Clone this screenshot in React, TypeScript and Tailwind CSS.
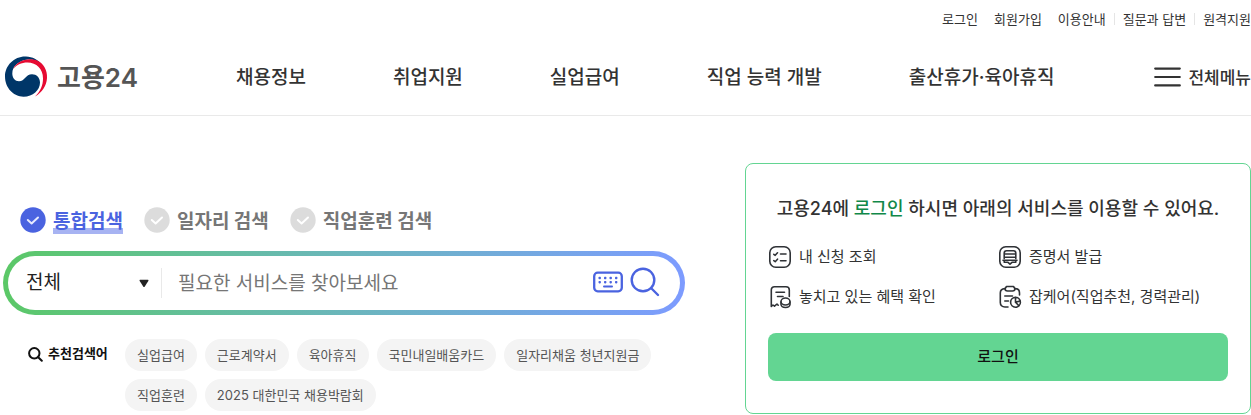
import React, { useState } from "react";

const NAV = ["채용정보", "취업지원", "실업급여", "직업 능력 개발", "출산휴가·육아휴직"];
const TABS = ["통합검색", "일자리 검색", "직업훈련 검색"];
const KEYWORDS = [
  "실업급여",
  "근로계약서",
  "육아휴직",
  "국민내일배움카드",
  "일자리채움 청년지원금",
  "직업훈련",
  "2025 대한민국 채용박람회",
];

function GovMark() {
  return (
    <svg width="44" height="44" viewBox="0 0 44 44" aria-hidden="true">
      <path
        d="M22 1.5C10.500 1 1 10.300 1 21.600C1 33 9.500 41.700 19.500 41.700C29 41.700 36 35 36 27.500C36 22.500 32.500 19.200 28 19.200C21.500 19.200 21 26.200 15 26.200C11 26.200 8.300 23 8.300 18.500C8.300 11 15 5.500 24 4.500C29 4 34.500 6 38 9.800C34 4.500 28.500 1.700 22 1.500Z"
        fill="#003668"
      />
      <path
        d="M9 14.500C12 6.500 23 2.200 32.500 5.200C39.500 8 43.500 15 43 23C42.500 31 38 37.500 31 41.600C36.500 36 39 30.500 39 23.500C39 14 32.500 7.600 23.500 7.600C17.500 7.600 12 10 9 14.500Z"
        fill="#e60a32"
      />
    </svg>
  );
}

function CheckCircle({ on }: { on: boolean }) {
  return (
    <svg width="26" height="26" viewBox="0 0 26 26" aria-hidden="true">
      <circle cx="13" cy="13" r="12.700" fill={on ? "#4a63e0" : "#dcdcdc"} />
      <path d="M7.800 13L11.600 16.500L18 10.500" fill="none" stroke={on ? "#e6eaff" : "#fff"} strokeWidth="2" strokeLinecap="round" strokeLinejoin="round" />
    </svg>
  );
}

function KeyboardIcon() {
  return (
    <svg width="30" height="24" viewBox="0 0 30 24" aria-hidden="true">
      <rect x="1.200" y="1.700" width="27.600" height="18.600" rx="3.500" fill="none" stroke="#4a63e0" strokeWidth="2.300" />
      {[6.7, 12.2, 17.7, 23.2].map((x) => (
        <g key={x} fill="#4a63e0">
          <rect x={x - 1.2} y="5.800" width="2.400" height="2.400" rx="0.800" />
          <rect x={x - 1.2} y="10" width="2.400" height="2.400" rx="0.800" />
        </g>
      ))}
      <path d="M11 15.600H19" stroke="#4a63e0" strokeWidth="2" strokeLinecap="round" />
    </svg>
  );
}

function SearchIcon() {
  return (
    <svg width="30" height="32" viewBox="0 0 30 32" aria-hidden="true" fill="none" stroke="#4a63e0" strokeWidth="2.400" strokeLinecap="round">
      <circle cx="13" cy="13" r="11.300" />
      <path d="M21 21L28 28" />
    </svg>
  );
}

const iconProps = {
  width: 24,
  height: 24,
  viewBox: "0 0 24 24",
  fill: "none",
  stroke: "#2f3236",
  strokeWidth: 1.6,
  strokeLinecap: "round" as const,
  strokeLinejoin: "round" as const,
  "aria-hidden": true,
};

const SERVICES = [
  {
    label: "내 신청 조회",
    icon: (
      <svg {...iconProps}>
        <rect x="1.800" y="1.800" width="20.400" height="20.400" rx="6" />
        <path d="M5.800 9.300L7.200 10.300L9.500 7.800M5.800 15.700L7.200 16.700L9.500 14.200M12.500 9H18M12.500 15.700H18" />
      </svg>
    ),
  },
  {
    label: "증명서 발급",
    icon: (
      <svg {...iconProps}>
        <rect x="1.800" y="1.800" width="20.400" height="20.400" rx="6" />
        <path d="M6.200 13.500V8.200C6.200 6.600 7 5.800 8.500 5.800H15.500C17 5.800 17.800 6.600 17.800 8.200V13.500M7 9H17M7 12.200H17M5 15.200H19M6.200 15.500V17.300H10L12 19.200L14 17.300H17.800V15.500" />
      </svg>
    ),
  },
  {
    label: "놓치고 있는 혜택 확인",
    icon: (
      <svg {...iconProps}>
        <path d="M10.200 20.200L9 19L6.500 21.200L5 20L3.300 21.500V5C3.300 3 4.500 1.800 6.500 1.800H18C20 1.800 21.300 3 21.300 5V11.500M8 7.200H16.500M9.500 11.500H15" />
        <ellipse cx="17.500" cy="16.500" rx="4.500" ry="3.500" />
        <path d="M13 17V19.500C13.500 23.400 21.500 23.400 22 19.500V17" />
      </svg>
    ),
  },
  {
    label: "잡케어(직업추천, 경력관리)",
    icon: (
      <svg {...iconProps}>
        <path d="M10 22H7C4 22 2.300 20.300 2.300 17.500V8C2.300 5.500 4 3.700 6.800 3.600M17.200 3.600C20 3.700 21.500 5.500 21.500 8V10M6.800 11H14.500M6.800 16H10.500" />
        <path d="M8.500 1.500H15.500L17 3.800C17 5.300 16 6 14.500 6H9.500C8 6 7 5.300 7 3.800Z" />
        <circle cx="17.500" cy="17.300" r="4.900" />
        <path d="M17.500 12.500V17.300L20.800 20.600M17.500 17.300L22 16" />
      </svg>
    ),
  },
];

export default function App() {
  const [tab, setTab] = useState(0);

  return (
    <div className="bg-white font-[Inter,'Noto_Sans_CJK_KR',sans-serif] text-[#333]">
      <header className="border-b border-[#e9e9e9]">
        <div className="flex h-[38px] items-center justify-end text-[13px] leading-4">
          <a href="#login">로그인</a>
          <a href="#join" className="ml-4">회원가입</a>
          <a href="#guide" className="ml-4">이용안내</a>
          <span className="mx-2 h-3 w-px bg-[#e5e5e5]" />
          <a href="#qna">질문과 답변</a>
          <span className="mx-2 h-3 w-px bg-[#e5e5e5]" />
          <a href="#remote">원격지원</a>
        </div>
        <div className="flex h-[77px] items-center">
          <a href="#home" className="flex w-[232px] shrink-0 items-center gap-[9px] pl-1 text-[26px] leading-8 font-medium text-[#555]">
            <GovMark />
            <span className="pt-0.5 font-semibold">고용24</span>
          </a>
          <nav className="flex gap-[87px] pt-0.5 pl-1 text-[19px] leading-7 font-medium whitespace-nowrap">
            {NAV.map((item) => (
              <a key={item} href="#menu">{item}</a>
            ))}
          </nav>
          <button type="button" className="ml-auto flex items-center gap-[7px] text-[17px] leading-6 font-medium whitespace-nowrap">
            <svg width="27" height="20" viewBox="0 0 27 20" aria-hidden="true" stroke="#333" strokeWidth="2.200" strokeLinecap="round">
              <path d="M1.200 1.600H25.800M1.200 10H25.800M1.200 18.400H25.800" />
            </svg>
            <span className="pt-0.5">전체메뉴</span>
          </button>
        </div>
      </header>

      <main className="flex gap-[60px] pt-[47px]">
        <section className="min-w-0 flex-1 pt-[43px] pl-[3px]">
          <div role="radiogroup" aria-label="검색 구분" className="flex gap-[21px] pl-[17px]">
            {TABS.map((label, i) => (
              <label key={label} className="flex cursor-pointer items-center gap-[7px]">
                <span className="grid">
                  <input
                    type="radio"
                    name="scope"
                    className="col-start-1 row-start-1 size-[26px] cursor-pointer appearance-none rounded-full"
                    checked={tab === i}
                    onChange={() => setTab(i)}
                  />
                  <span className="pointer-events-none col-start-1 row-start-1">
                    <CheckCircle on={tab === i} />
                  </span>
                </span>
                <span
                  className={
                    tab === i
                      ? "pt-1 text-[19px] leading-6 font-bold text-[#4a63e0] shadow-[inset_0_-6px_0_#a7b3f2]"
                      : "pt-1 text-[19px] leading-6 font-bold text-[#767676]"
                  }
                >
                  {label}
                </span>
              </label>
            ))}
          </div>

          <form className="mt-[17px] rounded-full bg-linear-to-r from-[#5bc866] to-[#7d9bff] p-[5px]" onSubmit={(e) => e.preventDefault()}>
            <div className="flex h-[54px] items-center rounded-full bg-white pr-5 pl-[18px] text-[19px]">
              <div className="grid w-[136px] shrink-0 items-center border-r border-[#e9e9e9]">
                <select aria-label="검색 범위" className="col-start-1 row-start-1 h-[30px] w-full appearance-none bg-transparent text-[#222]">
                  <option>전체</option>
                </select>
                <svg width="10" height="9" viewBox="0 0 10 9" aria-hidden="true" className="pointer-events-none col-start-1 row-start-1 mr-3 justify-self-end">
                  <path d="M1.200 0.800H8.800Q10 0.800 9.300 2L5.800 7.600Q5 8.600 4.200 7.600L0.700 2Q0 0.800 1.200 0.800Z" fill="#222" />
                </svg>
              </div>
              <input
                type="text"
                aria-label="검색어"
                placeholder="필요한 서비스를 찾아보세요"
                className="h-10 min-w-0 flex-1 px-4 outline-none placeholder:text-[#767676]"
              />
              <button type="button" aria-label="가상 키보드" className="mr-[7px]">
                <KeyboardIcon />
              </button>
              <button type="submit" aria-label="검색">
                <SearchIcon />
              </button>
            </div>
          </form>

          <div className="mt-6 flex pl-[25px]">
            <h2 className="flex h-[30px] w-[97px] shrink-0 items-center gap-[5px] text-[13px] font-bold text-[#111]">
              <svg width="15" height="15" viewBox="0 0 15 15" aria-hidden="true" fill="none" stroke="#111" strokeWidth="2" strokeLinecap="round">
                <circle cx="6.300" cy="6.300" r="5.200" />
                <path d="M10.200 10.200L13.800 13.800" />
              </svg>
              추천검색어
            </h2>
            <ul className="flex flex-wrap gap-2">
              {KEYWORDS.map((word) => (
                <li key={word}>
                  <a href="#keyword" className="block rounded-full bg-[#f4f4f4] px-3 text-[13px] leading-8 text-[#555]">{word}</a>
                </li>
              ))}
            </ul>
          </div>
        </section>

        <section className="w-[506px] shrink-0 rounded-lg border border-[#63d592] px-[22px] pt-[31px] pb-8">
          <h2 className="text-center text-[18px] leading-7 font-medium whitespace-nowrap">
            고용24에 <strong className="font-medium text-[#118849]">로그인</strong> 하시면 아래의 서비스를 이용할 수 있어요.
          </h2>
          <ul className="mt-[22px] grid grid-cols-2 gap-y-4 text-[15px] leading-6">
            {SERVICES.map((s) => (
              <li key={s.label} className="flex items-center gap-[7px]">
                {s.icon}
                {s.label}
              </li>
            ))}
          </ul>
          <button type="button" className="mt-6 h-12 w-full rounded-lg bg-[#63d592] text-[15px] font-medium text-[#111]">
            로그인
          </button>
        </section>
      </main>
    </div>
  );
}
